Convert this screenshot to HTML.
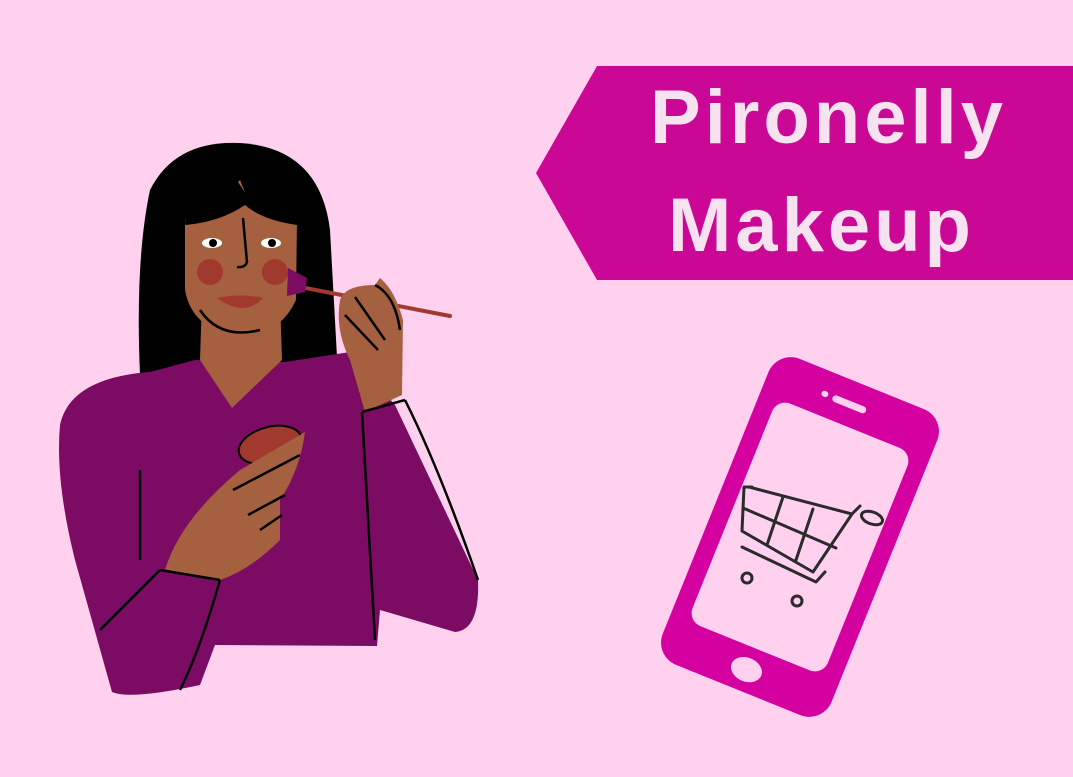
<!DOCTYPE html>
<html><head><meta charset="utf-8"><style>
html,body{margin:0;padding:0;}
body{width:1073px;height:777px;background:#ffd1ee;position:relative;overflow:hidden;font-family:"Liberation Sans","DejaVu Sans",sans-serif;}
svg{position:absolute;left:0;top:0;}
.t{position:absolute;color:#f7e2ef;font-weight:bold;font-size:76px;line-height:1;white-space:nowrap;letter-spacing:4px;}
</style></head><body>
<svg width="1073" height="777" viewBox="0 0 1073 777">
  <polygon points="536,173 597,66 1073,66 1073,280 597,280" fill="#cb0895"/>
  <g transform="translate(800,537) rotate(22)">
    <rect x="-91" y="-165" width="182" height="330" rx="24" fill="#d400a0"/>
    <rect x="-73" y="-120" width="146" height="240" rx="14" fill="#ffd1ee"/>
    <rect x="-22" y="-145" width="36" height="7" rx="3.5" fill="#ffd1ee"/>
    <rect x="-34" y="-145" width="7" height="6" rx="3" fill="#ffd1ee"/>
    <ellipse cx="0" cy="143" rx="16" ry="12" fill="#ffd1ee"/>
  </g>
  <g fill="none" stroke="#2b2b2b" stroke-width="3" stroke-linecap="round" stroke-linejoin="round">
    <path d="M752,487 L744,487 L742,531 L813,572 L852,514 L749,487"/>
    <path d="M743,508 L836,548"/>
    <path d="M783,497 L767,545 M813,509 L796,560"/>
    <path d="M852,514 L860,506"/>
    <path d="M742,547 L816,582 L825,572"/>
    <ellipse cx="872" cy="518" rx="11" ry="6" transform="rotate(20 872 518)"/>
    <circle cx="747" cy="578" r="5"/>
    <circle cx="797" cy="601" r="5"/>
  </g>
  <path d="M150,190 Q175,140 240,143 Q320,148 330,230 L338,375 L140,375 Q135,260 150,190Z" fill="#000"/>
  <path d="M60,425 Q70,378 150,372 L195,360 L285,362 L350,352 L395,405 L478,580 Q480,630 455,632 L380,610 L377,646 L215,645 L200,685 Q130,700 112,692 L75,560 Q55,480 60,425Z" fill="#7b0b63"/>
  <path d="M202,300 L200,360 L232,408 L282,360 L280,300Z" fill="#a5603f"/>
  <path d="M185,220 Q190,205 210,210 L240,180 L250,205 L297,218 L296,300 Q280,335 240,337 Q192,330 185,290Z" fill="#a5603f"/>
  <path d="M185,225 L186,205 Q215,196 238,182 L250,200 Q270,213 297,215 L297,225 Q262,220 245,205 Q220,222 185,225Z" fill="#000"/>
  <ellipse cx="212" cy="243" rx="10" ry="5" fill="#fff"/><circle cx="213" cy="243" r="4" fill="#000"/>
  <ellipse cx="271" cy="243" rx="10" ry="5" fill="#fff"/><circle cx="272" cy="243" r="4" fill="#000"/>
  <path d="M243,218 Q246,250 247,262 Q245,268 237,267" stroke="#000" stroke-width="2.5" fill="none"/>
  <circle cx="210" cy="272" r="13" fill="#a2392f"/>
  <circle cx="275" cy="272" r="13" fill="#a2392f"/>
  <path d="M217,298 Q240,293 263,298 Q245,318 217,298Z" fill="#a2392f"/>
  <path d="M200,310 Q220,340 260,330" stroke="#000" stroke-width="2.5" fill="none"/>
  <path d="M290,285 L450,316" stroke="#a2392f" stroke-width="4" stroke-linecap="round"/>
  <path d="M288,268 L307,278 L305,292 L287,296Z" fill="#7b0b63"/>
  <path d="M340,300 Q345,285 375,285 L380,278 Q395,290 403,320 L402,395 L365,412 L350,360 Q335,330 340,300Z" fill="#a5603f"/>
  <path d="M375,285 Q395,295 400,330 M355,297 L385,340 M345,315 L378,350" stroke="#000" stroke-width="2.5" fill="none"/>
  <path d="M362,412 L405,400 M362,412 L375,640 M405,400 Q440,470 478,580" stroke="#000" stroke-width="2.5" fill="none"/>
  <ellipse cx="270" cy="445" rx="32" ry="18" transform="rotate(-15 270 445)" fill="#a2392f" stroke="#000" stroke-width="2"/>
  <path d="M240,470 L305,432 Q300,470 280,500 L280,540 Q250,570 220,580 L165,570 Q180,520 240,470Z" fill="#a5603f"/>
  <path d="M233,490 L300,455 M248,515 L285,495 M260,530 L282,515" stroke="#000" stroke-width="2.5" fill="none"/>
  <path d="M160,570 L220,580 M160,570 L100,630 M220,580 Q200,650 180,690 M140,470 L140,560" stroke="#000" stroke-width="2.5" fill="none"/>
</svg>
<div class="t" style="left:650px;top:80px;">Pironelly</div>
<div class="t" style="left:668px;top:188px;">Makeup</div>
</body></html>
